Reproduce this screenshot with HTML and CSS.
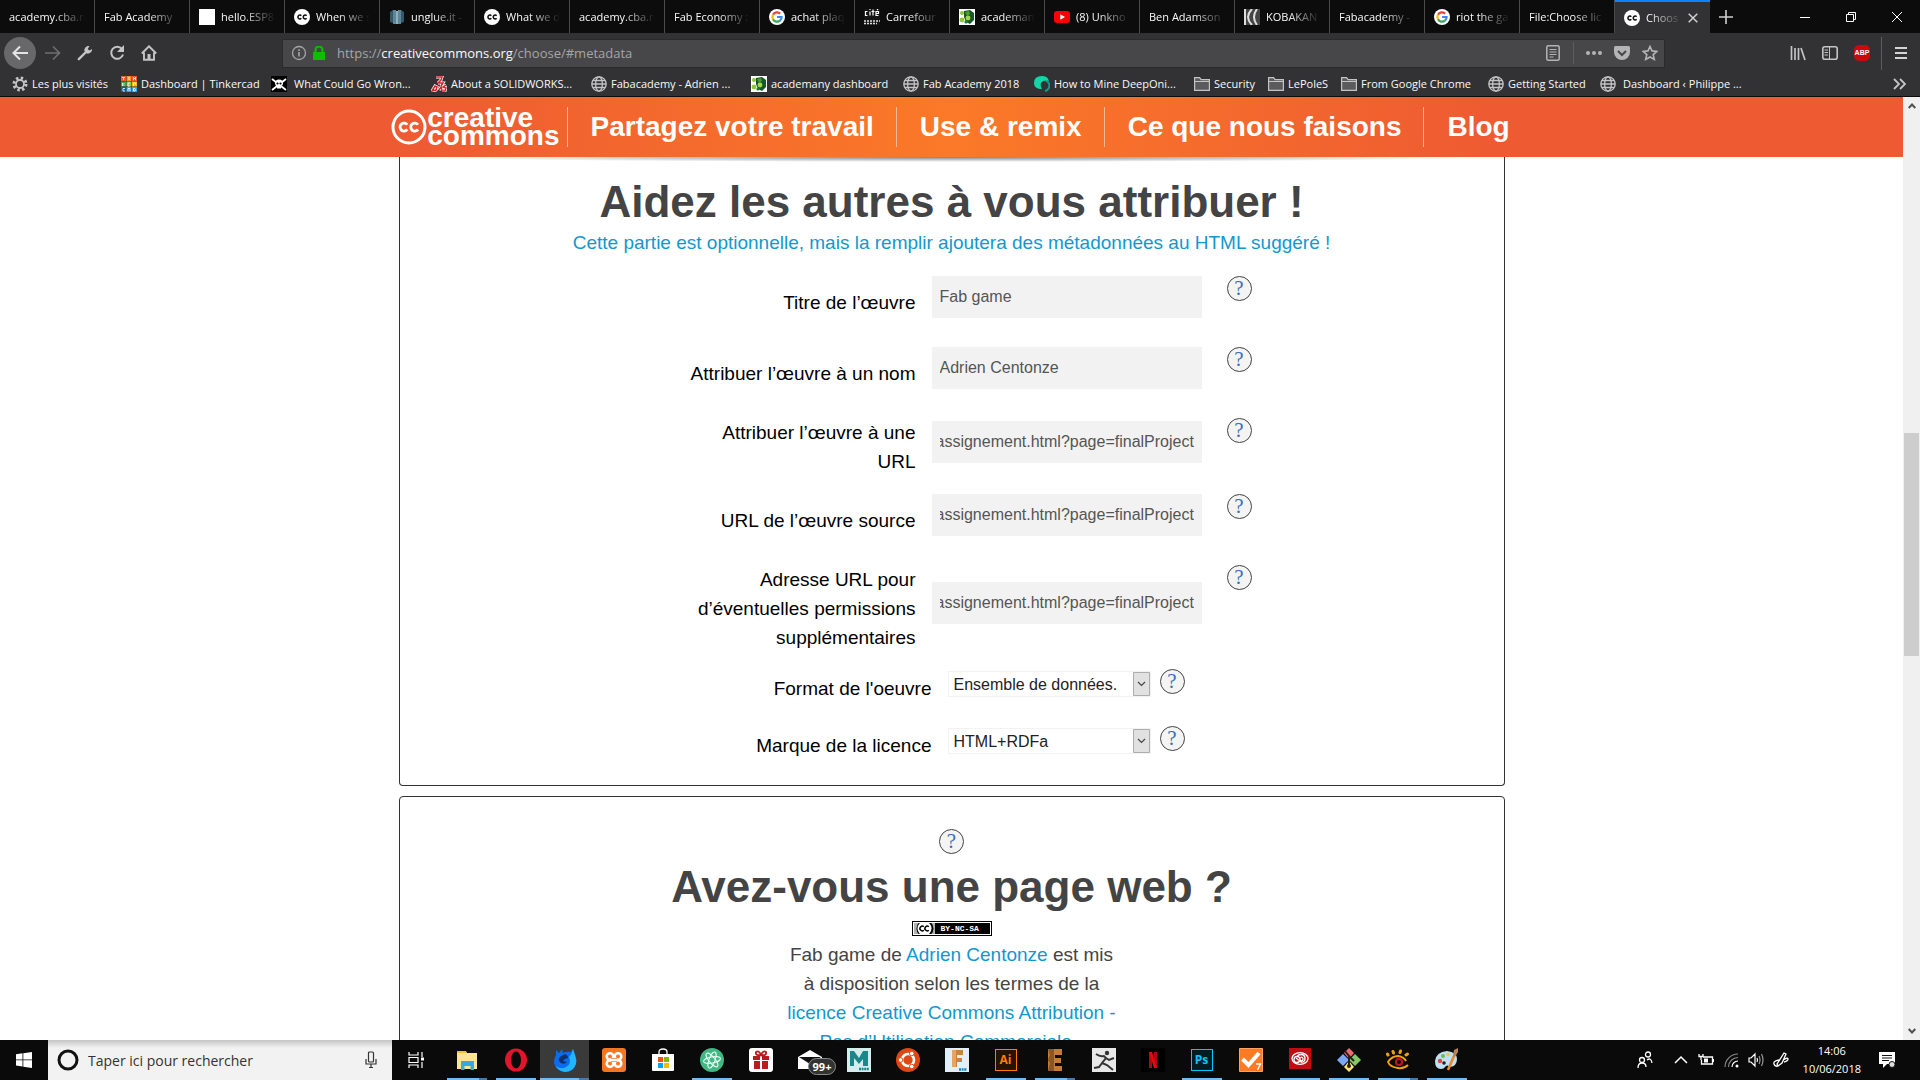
FILE: index.html
```html
<!DOCTYPE html>
<html lang="fr">
<head>
<meta charset="utf-8">
<title>Choose a License</title>
<link rel="stylesheet" href="styles.css">
</head>
<body>
<svg class="defs" aria-hidden="true">
  <symbol id="cc" viewBox="0 0 16 16"><circle cx="8" cy="8" r="8" fill="#fff"/><path d="M7.3 6.8a1.9 1.9 0 1 0 0 2.4M12.6 6.8a1.9 1.9 0 1 0 0 2.4" fill="none" stroke="#111" stroke-width="1.5"/></symbol>
  <symbol id="google" viewBox="0 0 16 16"><circle cx="8" cy="8" r="8" fill="#fff"/><g fill="none" stroke-width="2.2"><path d="M11.2 4.6A4.6 4.6 0 0 0 4 5.8" stroke="#ea4335"/><path d="M4 5.8a4.6 4.6 0 0 0 0 4.4" stroke="#fbbc05"/><path d="M4 10.2a4.6 4.6 0 0 0 7 1.4" stroke="#34a853"/><path d="M11 11.6A4.6 4.6 0 0 0 12.6 8H8" stroke="#4285f4"/></g></symbol>
  <symbol id="academany" viewBox="0 0 16 16"><path d="M0 0h16v16H0z" fill="#fff"/><path d="M5 2l6-1 4 3v7l-4 4-4-2-2-5z" fill="#15592a"/><path d="M6 3l4-1 1 3-3 2z" fill="#4e9a2b"/><circle cx="3" cy="4" r="2" fill="#8cc63f"/><circle cx="9" cy="9" r="2.4" fill="#a6d648"/><circle cx="3" cy="11" r="2.4" fill="#8cc63f"/><circle cx="7" cy="13" r="1.6" fill="#1f7a35"/></symbol>
  <symbol id="globe" viewBox="0 0 16 16"><g fill="none" stroke="#c4c4c6" stroke-width="1.3"><circle cx="8" cy="8" r="7.2"/><ellipse cx="8" cy="8" rx="3.4" ry="7.2"/><path d="M1 8h14M2 4.5h12M2 11.500h12"/></g></symbol>
  <symbol id="folder" viewBox="0 0 16 16"><path d="M.6 14.400V1.600h5l1.500 2h8.300v10.800z" fill="#5b5b5d" stroke="#c4c4c6" stroke-width="1.200"/><path d="M1 5.500h14" stroke="#c4c4c6"/></symbol>
</svg>

<header class="browser">
  <div class="tabs">
    <a class="tab" href="#"><span>academy.cba.n</span></a>
    <a class="tab" href="#"><span>Fab Academy</span></a>
    <a class="tab" href="#"><svg viewBox="0 0 16 16"><path d="M0 0h16v16H0z" fill="#fff"/></svg><span>hello.ESP8</span></a>
    <a class="tab" href="#"><svg><use href="#cc"/></svg><span>When we s</span></a>
    <a class="tab" href="#"><svg viewBox="0 0 16 16"><path d="M1 3l3-2v13l-3-1zM12 1l3 2v10l-3 1z" fill="#35586a"/><path d="M4 1h3v14H4zM9 1h3v14H9z" fill="#5d8799"/><path d="M7 2h2v13H7z" fill="#8fb0bd"/></svg><span>unglue.it -</span></a>
    <a class="tab" href="#"><svg><use href="#cc"/></svg><span>What we d</span></a>
    <a class="tab" href="#"><span>academy.cba.n</span></a>
    <a class="tab" href="#"><span>Fab Economy :</span></a>
    <a class="tab" href="#"><svg><use href="#google"/></svg><span>achat plaq</span></a>
    <a class="tab" href="#"><svg viewBox="0 0 16 16"><path d="M0 0h16v16H0z" fill="#151515"/><path d="M3.500 2.500H1.500v4h2M6 2.500v4M6 0v1M9 .5v6M7.500 2.500h3M14.500 6.500h-2.500v-4h2.500v2H12M13 1l1-1" fill="none" stroke="#fff" stroke-width="1.200"/><path d="M0 12h16M0 14.500h13" stroke="#ddd" stroke-width="1.500" stroke-dasharray="2 1"/></svg><span>Carrefour</span></a>
    <a class="tab" href="#"><svg><use href="#academany"/></svg><span>academan</span></a>
    <a class="tab" href="#"><svg viewBox="0 0 16 16"><rect y="2" width="16" height="12" rx="3" fill="#f00"/><path d="M6.300 5.200v5.600L11 8z" fill="#fff"/></svg><span>(8) Unkno</span></a>
    <a class="tab" href="#"><span>Ben Adamson</span></a>
    <a class="tab" href="#"><svg viewBox="0 0 16 16"><path d="M0 0h16v16H0z" fill="#444"/><path d="M1 0v16M8 0Q0 8 8 16M13 0Q7 8 13 16" fill="none" stroke="#ddd" stroke-width="2"/></svg><span>KOBAKAN</span></a>
    <a class="tab" href="#"><span>Fabacademy -</span></a>
    <a class="tab" href="#"><svg><use href="#google"/></svg><span>riot the ga</span></a>
    <a class="tab" href="#"><span>File:Choose lic</span></a>
    <a class="tab active" href="#"><svg><use href="#cc"/></svg><span>Choos</span><svg class="x" viewBox="0 0 10 10"><path d="M.7.7l8.600 8.600M9.300.7L.7 9.300" stroke="#d0d0d2" stroke-width="1.500"/></svg></a>
    <button class="newtab" aria-label="Nouvel onglet"><svg viewBox="0 0 14 14"><path d="M7 0v14M0 7h14" stroke="#d0d0d2" stroke-width="1.600"/></svg></button>
    <div class="win">
      <button aria-label="Réduire"><svg viewBox="0 0 10 10"><path d="M0 5.500h10" stroke="#fff"/></svg></button>
      <button aria-label="Restaurer"><svg viewBox="0 0 10 10"><path d="M.5 2.500h7v7h-7zM2.500 2.500v-2h7v7h-2" fill="none" stroke="#fff"/></svg></button>
      <button aria-label="Fermer"><svg viewBox="0 0 10 10"><path d="M0 0l10 10M10 0L0 10" stroke="#fff"/></svg></button>
    </div>
  </div>

  <div class="toolbar">
    <button class="back" aria-label="Précédent"><svg viewBox="0 0 16 16"><path d="M16 8H1.500M8 1.500L1.500 8 8 14.500" fill="none" stroke="#e4e4e6" stroke-width="2"/></svg></button>
    <button class="tool" aria-label="Suivant"><svg viewBox="0 0 16 16"><path d="M0 8h14.500M8 1.500L14.500 8 8 14.500" fill="none" stroke="#6f6f71" stroke-width="1.700"/></svg></button>
    <button class="tool" aria-label="Outils"><svg viewBox="0 0 16 16"><path d="M1.800 14.200L9 7" stroke="#c4c4c6" stroke-width="2.400" stroke-linecap="round"/><path d="M12.500 1A4.300 4.300 0 0 0 7.400 6l2.500 2.600A4.300 4.300 0 0 0 15 4l-2.600 1.500-1.700-1.600z" fill="#c4c4c6"/></svg></button>
    <button class="tool" aria-label="Actualiser"><svg viewBox="0 0 16 16"><path d="M12.900 4A6 6 0 1 0 14 9.500" fill="none" stroke="#c4c4c6" stroke-width="2"/><path d="M15 0v7H8z" fill="#c4c4c6"/></svg></button>
    <button class="tool" aria-label="Accueil"><svg viewBox="0 0 16 16"><path d="M.8 8.500L8 1.300l7.200 7.200M3 7.500v7.300h10V7.500" fill="none" stroke="#c4c4c6" stroke-width="1.900"/><path d="M6.500 9h3v5h-3z" fill="#c4c4c6"/></svg></button>
    <div class="urlbar">
      <svg viewBox="0 0 16 16"><circle cx="8" cy="8" r="6.500" fill="none" stroke="#a5a5a7" stroke-width="1.300"/><path d="M8 7v4.500M8 4.200V6" stroke="#a5a5a7" stroke-width="1.600"/></svg>
      <svg class="lock" viewBox="0 0 12 14"><path d="M0 6h12v8H0z" fill="#12bc00"/><path d="M2.500 7V4a3.500 3.500 0 0 1 7 0v3" fill="none" stroke="#12bc00" stroke-width="2"/></svg>
      <span class="url">https://<b>creativecommons.org</b>/choose/#metadata</span>
      <svg viewBox="0 0 16 16"><rect x="1.800" y=".8" width="12.400" height="14.400" rx="1.500" fill="none" stroke="#b4b4b6" stroke-width="1.500"/><path d="M4.500 4.500h7M4.500 7h7M4.500 9.500h7M4.500 12h4" stroke="#b4b4b6"/></svg>
      <i class="sep"></i>
      <svg viewBox="0 0 16 16"><circle cx="2" cy="8" r="2" fill="#b4b4b6"/><circle cx="8" cy="8" r="2" fill="#b4b4b6"/><circle cx="14" cy="8" r="2" fill="#b4b4b6"/></svg>
      <svg viewBox="0 0 16 16"><path d="M1.500 1h13Q16 1 16 2.500V7a8 8 0 0 1-16 0V2.500Q0 1 1.500 1z" fill="#b4b4b6"/><path d="M4 6l4 4 4-4" fill="none" stroke="#474749" stroke-width="2"/></svg>
      <svg viewBox="0 0 16 16"><path d="M8 1.500l2 4.400 4.800.5-3.600 3.200 1.100 4.800L8 12l-4.300 2.400 1.100-4.800L1.200 6.400 6 5.900z" fill="none" stroke="#b4b4b6" stroke-width="1.600"/></svg>
    </div>
    <div class="tools-right">
      <svg viewBox="0 0 16 16"><path d="M1.500 1v14M5 3v12M8.500 3v12M11 3l4 12" stroke="#c4c4c6" stroke-width="1.700"/></svg>
      <svg viewBox="0 0 16 16"><rect x=".8" y="1.800" width="14.400" height="12.400" rx="2" fill="none" stroke="#c4c4c6" stroke-width="1.600"/><path d="M7.500 2v12M2.500 5h3.500M2.500 7.500h3.500M2.500 10h3.500" stroke="#c4c4c6"/></svg>
      <span class="abp">ABP</span>
      <i class="sep"></i>
      <svg viewBox="0 0 16 16"><path d="M2 3h12M2 8h12M2 13h12" stroke="#d4d4d6" stroke-width="2"/></svg>
    </div>
  </div>

  <div class="bookmarks">
    <a href="#"><svg viewBox="0 0 16 16"><circle cx="8" cy="8" r="6" fill="none" stroke="#c4c4c6" stroke-width="3" stroke-dasharray="2.400 2.312"/><circle cx="8" cy="8" r="4" fill="none" stroke="#c4c4c6" stroke-width="1.800"/></svg>Les plus visités</a>
    <a href="#"><svg viewBox="0 0 16 16"><path d="M0 0h5v5H0z" fill="#f15a29"/><path d="M5.500 0h5v5h-5z" fill="#f7941e"/><path d="M11 0h5v5h-5z" fill="#f15a29"/><path d="M0 5.500h5v5H0z" fill="#39a845"/><path d="M5.500 5.500h5v5h-5z" fill="#8cc63f"/><path d="M11 5.500h5v5h-5z" fill="#fdb913"/><path d="M0 11h5v5H0z" fill="#0b60a8"/><path d="M5.500 11h5v5h-5zM11 11h5v5h-5z" fill="#27aae1"/><path d="M1 1.500h3M2.500 1.500V4M8 1v3M12.500 4V1.500l2 2V1M1.500 7v3M3.500 7l-1.500 1.500L3.500 10M9 7H7v3h2M12.500 10V7h2v1.500M4 12.500H2V15h2M7 15v-2.500h2V15M12.500 12.500H14l.5 1-.5 1.500h-1.500z" fill="none" stroke="#fff" stroke-width=".8"/></svg>Dashboard | Tinkercad</a>
    <a class="wide" href="#"><svg viewBox="0 0 16 16"><path d="M0 0h16v16H0z" fill="#000"/><path d="M1 3l14 11M15 3L1 14" stroke="#fff" stroke-width="1.800"/><ellipse cx="8" cy="7" rx="4" ry="3.600" fill="#fff"/><path d="M6 9h4v3.500H6z" fill="#fff"/><circle cx="6.500" cy="7.500" r="1.100"/><circle cx="9.500" cy="7.500" r="1.100"/></svg>What Could Go Wron...</a>
    <a href="#"><svg viewBox="0 0 16 16"><path d="M5 1h6l-1 3-3 3M7 7h5l-2 3M1 15l3-5 2 1-1 3zM8 14l2-3 1 3M15 9l-3 2 3 1-1 3h-3" fill="none" stroke="#fff" stroke-width="3"/><path d="M5 1h6l-1 3-3 3M7 7h5l-2 3M1 15l3-5 2 1-1 3zM8 14l2-3 1 3M15 9l-3 2 3 1-1 3h-3" fill="none" stroke="#da1f2d" stroke-width="1.500"/></svg>About a SOLIDWORKS...</a>
    <a href="#"><svg><use href="#globe"/></svg>Fabacademy - Adrien ...</a>
    <a href="#"><svg><use href="#academany"/></svg>academany dashboard</a>
    <a href="#"><svg><use href="#globe"/></svg>Fab Academy 2018</a>
    <a href="#"><svg viewBox="0 0 16 16"><path d="M11 15A5.500 5.500 0 1 0 5 7" fill="none" stroke="#0e9c84" stroke-width="2"/><path d="M8 0a7 7 0 0 1 7 5Q9 3 7 7q-1 3 1 6Q0 13 0 7q0-7 8-7z" fill="#12d6a8"/></svg>How to Mine DeepOni...</a>
    <a href="#"><svg><use href="#folder"/></svg>Security</a>
    <a href="#"><svg><use href="#folder"/></svg>LePoleS</a>
    <a href="#"><svg><use href="#folder"/></svg>From Google Chrome</a>
    <a href="#"><svg><use href="#globe"/></svg>Getting Started</a>
    <a class="wide" href="#"><svg><use href="#globe"/></svg>Dashboard ‹ Philippe ...</a>
    <svg class="more" viewBox="0 0 14 12"><path d="M1 1l5 5-5 5M7 1l5 5-5 5" fill="none" stroke="#c4c4c6" stroke-width="1.800"/></svg>
  </div>
</header>

<div class="viewport">
  <div class="page">
    <nav class="site">
      <a class="logo" href="#"><svg viewBox="0 0 36 36"><circle cx="18" cy="18" r="16" fill="none" stroke="#fff" stroke-width="3"/><path d="M16.300 15.800a4 4 0 1 0 0 4.600M27 15.800a4 4 0 1 0 0 4.600" fill="none" stroke="#fff" stroke-width="2.800"/></svg><span>creative<br>commons</span></a>
      <a href="#">Partagez votre travail</a>
      <a href="#">Use &amp; remix</a>
      <a href="#">Ce que nous faisons</a>
      <a href="#">Blog</a>
    </nav>
    <main>
      <form class="card first">
        <h1>Aidez les autres à vous attribuer !</h1>
        <p class="intro">Cette partie est optionnelle, mais la remplir ajoutera des métadonnées au HTML suggéré !</p>
        <div class="row"><label for="t">Titre de l’œuvre</label><input id="t" type="text" value="Fab game"><a class="help" href="#">?</a></div>
        <div class="row"><label for="n">Attribuer l’œuvre à un nom</label><input id="n" type="text" value="Adrien Centonze"><a class="help" href="#">?</a></div>
        <div class="row"><label for="u">Attribuer l’œuvre à une URL</label><input id="u" type="text" class="end" value="assignement.html?page=finalProject"><a class="help" href="#">?</a></div>
        <div class="row"><label for="s">URL de l’œuvre source</label><input id="s" type="text" class="end" value="assignement.html?page=finalProject"><a class="help" href="#">?</a></div>
        <div class="row"><label for="p">Adresse URL pour d’éventuelles permissions supplémentaires</label><input id="p" type="text" class="end" value="assignement.html?page=finalProject"><a class="help" href="#">?</a></div>
        <div class="row pick"><label for="f">Format de l'oeuvre</label><select id="f"><option>Ensemble de données.</option></select><a class="help" href="#">?</a></div>
        <div class="row pick"><label for="m">Marque de la licence</label><select id="m"><option>HTML+RDFa</option></select><a class="help" href="#">?</a></div>
      </form>
      <section class="card second">
        <a class="help" href="#">?</a>
        <h1>Avez-vous une page web ?</h1>
        <a class="badge" href="#"><svg viewBox="0 0 22 13"><path d="M0 0h22v13H0z" fill="#aab2ab"/><circle cx="12" cy="6.500" r="8.500" fill="#000"/><circle cx="11.500" cy="6.500" r="7" fill="#fff"/><path d="M10.800 4.800a2.300 2.300 0 1 0 0 3.400M15.800 4.800a2.300 2.300 0 1 0 0 3.400" fill="none" stroke="#000" stroke-width="1.500"/></svg><span>BY-NC-SA</span></a>
        <p class="terms">Fab game de <a href="#">Adrien Centonze</a> est mis à disposition selon les termes de la <a href="#">licence Creative Commons Attribution - Pas d’Utilisation Commerciale -</a></p>
      </section>
    </main>
  </div>
  <div class="scroll">
    <svg viewBox="0 0 8 6"><path d="M.7 5L4 1.500 7.300 5" fill="none" stroke="#505050" stroke-width="2"/></svg>
    <i></i>
    <svg viewBox="0 0 8 6"><path d="M.7 1L4 4.500 7.300 1" fill="none" stroke="#505050" stroke-width="2"/></svg>
  </div>
</div>

<footer class="taskbar">
  <button class="start" aria-label="Démarrer"><svg viewBox="0 0 16 16"><path d="M0 2.200L6.500 1.300v6.200H0zM7.300 1.200L16 0v7.500H7.300zM0 8.300h6.500v6.200L0 13.600zM7.300 8.300H16V16l-8.700-1.300z" fill="#fff"/></svg></button>
  <div class="search">
    <svg class="cortana" viewBox="0 0 22 22"><circle cx="11" cy="11" r="9" fill="none" stroke="#111" stroke-width="3"/></svg>
    <input type="text" aria-label="Rechercher" placeholder="Taper ici pour rechercher">
    <svg class="mic" viewBox="0 0 12 18"><rect x="3.500" y="1" width="5" height="10" rx="1" fill="none" stroke="#333" stroke-width="1.200"/><path d="M1 8v5h10V8M6 13v4M4 16.500h4" fill="none" stroke="#333" stroke-width="1.200"/></svg>
  </div>
  <div class="apps">
    <span><svg viewBox="0 0 24 24"><path d="M3 4v3h9V4M3 20v-3h9v3M3 9.500h9v5H3zM16 4v5M16 14v6" fill="none" stroke="#fff" stroke-width="1.200"/><path d="M15 9.500h3v3h-3z" fill="#fff"/></svg></span>
    <span class="run many"><svg viewBox="0 0 24 24"><path d="M2 3h9l1 2h10v16H2z" fill="#ffe493"/><path d="M2 3h9v2H2z" fill="#f2c230"/><path d="M6 22v-9h13v9h-3.500v-4h-6v4z" fill="#35a9e0"/></svg></span>
    <span class="run"><svg viewBox="0 0 24 24"><ellipse cx="12" cy="12" rx="11" ry="11.500" fill="#e0142a"/><ellipse cx="12" cy="12" rx="5" ry="8.500" fill="#0a0a0a"/></svg></span>
    <span class="run many on"><svg viewBox="0 0 24 24"><path d="M3 7l0-5 3 3 3-4 1 4q4-2 8-1l2-3 2 6q2 5 1 9-3 8-11 8-9-1-11-9 0-5 2-8z" fill="#0a6cf0"/><path d="M20 1l2 6q2 5 1 9-3 8-11 8-7-1-9-6 5 4 10 1 6-3 3-10 3-3 4-8z" fill="#21b4ff"/><path d="M8 8l4-2q3 1 3 4l-3 1-2 2 4 1q-3 3-6 1t-2-5z" fill="#12306b"/></svg></span>
    <span><svg viewBox="0 0 24 24"><rect width="24" height="24" rx="3" fill="#f37623"/><g fill="none" stroke="#fff" stroke-width="2.600"><circle cx="8" cy="8.500" r="3.300"/><circle cx="16" cy="8.500" r="3.300"/><circle cx="8" cy="15.500" r="3.300"/><circle cx="16" cy="15.500" r="3.300"/></g><path d="M9 10h6v4H9z" fill="#f37623"/><path d="M8 12h8" stroke="#fff" stroke-width="2.600"/></svg></span>
    <span><svg viewBox="0 0 24 24"><path d="M1 6h22v16q0 1-1 1H2q-1 0-1-1z" fill="#fff"/><path d="M8 6V4q0-3 4-3t4 3v2" fill="none" stroke="#fff" stroke-width="1.300"/><path d="M7 9h5v5H7z" fill="#f25022"/><path d="M13 9h5v5h-5z" fill="#7fba00"/><path d="M7 15h5v5H7z" fill="#00a4ef"/><path d="M13 15h5v5h-5z" fill="#ffb900"/></svg></span>
    <span class="run"><svg viewBox="0 0 24 24"><circle cx="12" cy="12" r="12" fill="#41b883"/><g fill="none" stroke="#e6fff2" stroke-width="1"><ellipse cx="12" cy="12" rx="3" ry="8.500" transform="rotate(20 12 12)"/><ellipse cx="12" cy="12" rx="3" ry="8.500" transform="rotate(80 12 12)"/><ellipse cx="12" cy="12" rx="3" ry="8.500" transform="rotate(140 12 12)"/></g></svg></span>
    <span><svg viewBox="0 0 24 24"><rect width="24" height="24" rx="3" fill="#fff"/><path d="M4 8h7v4H4zM13 8h7v4h-7zM5 13h6v8H5zM13 13h6v8h-6z" fill="#b81c1c"/><path d="M12 7Q6 8 7 4q3-2 5 3Q14 2 17 4q1 4-5 3" fill="none" stroke="#b81c1c" stroke-width="1.800"/></svg></span>
    <span class="mail"><svg viewBox="0 0 24 24"><path d="M0 9l12-7 12 7v12H0z" fill="#fff"/><path d="M1 9h22l-11 7z" fill="#111"/></svg><b>99+</b></span>
    <span><svg viewBox="0 0 24 24"><path d="M0 0h24v24H0z" fill="#d5edec"/><path d="M3 18V3h4l5 7 4-7h5v15h-5V11l-4 5-5-6v8z" fill="#19888b"/><path d="M12 21h10" stroke="#19888b" stroke-width="2.500" stroke-dasharray="2 .6"/></svg></span>
    <span><svg viewBox="0 0 24 24"><circle cx="12" cy="12" r="12" fill="#dd4814"/><circle cx="12" cy="12" r="6" fill="none" stroke="#fff" stroke-width="2.600"/><g fill="#fff" stroke="#dd4814"><circle cx="4.500" cy="12" r="2.300"/><circle cx="15.800" cy="5.500" r="2.300"/><circle cx="15.800" cy="18.500" r="2.300"/></g></svg></span>
    <span><svg viewBox="0 0 24 24"><path d="M0 0h24v24H0z" fill="#dff0fa"/><path d="M7 2h11v5h-6v3h5v4h-5v5H7z" fill="#c98343"/><path d="M7 2h4v17H7z" fill="#e5a364"/><path d="M14 21.500h8" stroke="#1789c7" stroke-width="2.500" stroke-dasharray="2 .6"/></svg></span>
    <span class="run"><b class="adobe ai">Ai</b></span>
    <span class="run many"><svg viewBox="0 0 24 24"><path d="M5 1h14v6h-7v3h6v5h-6v3h7v5H5z" fill="#c07c3a"/><path d="M5 1h6v22H5l2-8-2-3 2-5z" fill="#8b5524"/></svg></span>
    <span><svg viewBox="0 0 24 24"><path d="M0 0h24v24H0z" fill="#e8e8e8"/><circle cx="15" cy="5" r="2.200" fill="#333"/><path d="M4 6q4 3 8 2l2 2-4 5 5 2 6 5M10 15l-3 4-5 1M14 10l3 2 5-2" fill="none" stroke="#333" stroke-width="2"/></svg></span>
    <span><svg viewBox="0 0 24 24"><path d="M0 0h24v24H0z" fill="#000"/><path d="M8 4h3v16H8zM13 4h3v16h-3z" fill="#b20710"/><path d="M8 4h3l5 16h-3z" fill="#e50914"/></svg></span>
    <span class="run"><b class="adobe ps">Ps</b></span>
    <span><svg viewBox="0 0 24 24"><path d="M.5.5h23v23H.5z" fill="#ff7a22" stroke="#ffa265"/><path d="M3.500 11l6 6L20 5" fill="none" stroke="#fff" stroke-width="4"/><path d="M17 16h4.500l-3 6" fill="none" stroke="#fff" stroke-width="1.300"/></svg></span>
    <span class="run"><svg viewBox="0 0 24 24"><path d="M1 0h22v21H1z" fill="#c00d10"/><g fill="none" stroke="#fff" stroke-width="1.300"><ellipse cx="12" cy="10.500" rx="8" ry="5.800"/><circle cx="9" cy="11.500" r="3"/><path d="M9 8.500q1-2 4-2 4 0 4 4t-4 3.500l-5-4M12 10q3-2 3 1t-3 1"/></g></svg></span>
    <span class="run"><svg viewBox="0 0 24 24"><path d="M12 0l5 5-5 6-5-6z" fill="#ef6b6b"/><path d="M6 6l6 6-6 6-6-6z" fill="#7da7f0"/><path d="M18 6l6 6-6 6-6-6z" fill="#85c866"/><path d="M12 13l5 6-5 5-5-5z" fill="#ffe271"/><path d="M8 3l4 5v10M12 8l5 5" fill="none" stroke="#222" stroke-width="2"/><circle cx="12" cy="18" r="2" fill="#222"/></svg></span>
    <span class="run many"><svg viewBox="0 0 24 24"><path d="M22 17q-4 4-10 3-8-1-10-6 4-6 10-6 6 1 8 5" fill="none" stroke="#f2a10c" stroke-width="2"/><circle cx="13" cy="14" r="3" fill="none" stroke="#c3141a" stroke-width="2.200"/><path d="M2 7L1.500 6M7.500 5L7 3.500M14 4.500l.5-1.500M20 7l1.500-1" stroke="#f2a10c" stroke-width="3" stroke-linecap="round"/></svg></span>
    <span class="run"><svg viewBox="0 0 24 24"><path d="M12 3Q1 4 0 13q0 8 6 8 3 0 4-2 2-3 5 0 7-1 7-8 0-7-10-8z" fill="#bfe0f2"/><circle cx="5" cy="13" r="2.200" fill="#e0453b"/><circle cx="8" cy="8" r="2" fill="#6abf4b"/><circle cx="13" cy="6.500" r="1.800" fill="#f0c93b"/><circle cx="9" cy="15" r="1.800" fill="#222"/><path d="M13 22l6-14" stroke="#e68a2c" stroke-width="2.600"/><path d="M18 8l1-6 4-2v4l-3 5z" fill="#b98252"/></svg></span>
  </div>
  <div class="tray">
    <svg viewBox="0 0 16 18"><g fill="none" stroke="#fff" stroke-width="1.300"><circle cx="11" cy="3.500" r="2.500"/><circle cx="5" cy="9" r="2.500"/><path d="M1 17q0-5 4-5t4 4M10 9q4-3 5 3"/></g></svg>
    <svg viewBox="0 0 16 16"><path d="M2 11l6-6 6 6" fill="none" stroke="#fff" stroke-width="1.500"/></svg>
    <svg viewBox="0 0 16 16"><path d="M5 5h9.500v7H3.500V8M1 2v2.500h4V2M3 5v3" fill="none" stroke="#fff" stroke-width="1.300"/><path d="M6 6.500h4v4H6zM15 7h1v3h-1z" fill="#fff"/></svg>
    <svg viewBox="0 0 16 16"><g fill="none" stroke="#888" stroke-width="1.200"><path d="M2 15A13 13 0 0 1 15 2"/><path d="M5.500 15A9.500 9.500 0 0 1 15 5.500"/></g><path d="M9 15a6 6 0 0 1 6-6" fill="none" stroke="#fff" stroke-width="1.200"/><circle cx="14" cy="14" r="1.500" fill="#fff"/></svg>
    <svg viewBox="0 0 16 16"><path d="M1 6v4h2l4 4V2L3 6zM9 6q1 2 0 4" fill="none" stroke="#fff" stroke-width="1.200"/><path d="M11 4q2 4 0 8M13.500 2q3 6 0 12" fill="none" stroke="#999" stroke-width="1.200"/></svg>
    <svg viewBox="0 0 16 16"><path d="M4 12L11 1l2 1-4 9-4 3zM6 8q-6 1-5 4t4 2M10 8q5-3 5-1t-4 3" fill="none" stroke="#fff" stroke-width="1.300"/></svg>
    <time>14:06<br>10/06/2018</time>
    <svg viewBox="0 0 16 16"><path d="M0 0h16v12H8l-4 4v-4H0z" fill="#fff"/><path d="M3 3.500h10M3 6h10M3 8.500h7" stroke="#111"/><circle cx="13" cy="12.500" r="3" fill="#ddd" stroke="#111"/></svg>
  </div>
</footer>
<script src="script.js"></script>
</body>
</html>
```
FILE: styles.css
```css
* { box-sizing: border-box; }

body {
  margin: 0;
  height: 100vh;
  display: flex;
  flex-direction: column;
  overflow: hidden;
  background: #fff;
  font-family: "Liberation Sans", Arial, sans-serif;
}

a { color: inherit; text-decoration: none; }
button { border: 0; padding: 0; background: none; }
svg { display: block; flex: none; }
.defs { position: absolute; width: 0; height: 0; }

/* Browser chrome */
.browser {
  flex: none;
  background: #323234;
  border-bottom: 1px solid #0c0c0d;
  color: #f9f9fa;
  font: 11px/16px "Open Sans", sans-serif;
}

.tabs { display: flex; height: 33px; background: #0c0c0d; }

.tab {
  flex: none;
  display: flex;
  align-items: center;
  gap: 6px;
  width: 95px;
  padding: 0 9px;
  border-right: 1px solid #4a4a4c;
}
.tab svg { width: 16px; height: 16px; }
.tab span {
  flex: 1;
  overflow: hidden;
  white-space: nowrap;
  mask-image: linear-gradient(to left, transparent, #000 32px);
}
.tab.active { padding-right: 12px; background: #323234; border-top: 2px solid #0a84ff; border-right: 0; }
.tab .x { width: 10px; height: 10px; }
.newtab { display: grid; place-items: center; width: 32px; }
.newtab svg { width: 14px; height: 14px; }
.win { display: flex; margin-left: auto; }
.win button { display: grid; place-items: center; width: 46px; }
.win svg { width: 10px; height: 10px; }

.toolbar { display: flex; align-items: center; height: 40px; padding: 0 11px 0 4px; }
.back {
  display: grid;
  place-items: center;
  width: 32px;
  height: 32px;
  margin-right: 1px;
  border-radius: 50%;
  background: #68686a;
}
.tool { display: grid; place-items: center; width: 32px; height: 32px; }
.toolbar svg { width: 16px; height: 16px; }
.urlbar {
  flex: 1;
  display: flex;
  align-items: center;
  gap: 12px;
  height: 29px;
  margin: 0 125px 0 117px;
  padding: 0 6px 0 8px;
  background: #474749;
  border: 1px solid #2a2a2c;
}
.urlbar .lock { width: 12px; height: 14px; margin-left: -6px; }
.url { flex: 1; font-size: 13px; color: #a5a5a7; }
.url b { font-weight: 400; color: #f9f9fa; }
.sep { width: 1px; height: 22px; background: #5d5d60; }
.tools-right { display: flex; align-items: center; gap: 16px; }
.tools-right .sep { height: 33px; margin: 0 -5px; }
.abp {
  width: 16px;
  height: 16px;
  border-radius: 5px;
  background: #c80c0c;
  font: bold 7px/16px "Liberation Sans", Arial, sans-serif;
  text-align: center;
}

.bookmarks {
  display: grid;
  grid-template-columns: 109px 150px 160px 160px 160px 152px 131px 160px 74px 73px 147px 112px 1fr auto;
  align-items: center;
  height: 23px;
  padding: 0 13px 2px 12px;
}
.bookmarks a { display: flex; align-items: center; gap: 4px; white-space: nowrap; }
.bookmarks .wide { gap: 7px; }
.bookmarks a svg { width: 16px; height: 16px; }
.more { width: 14px; height: 12px; }

/* Page area with its scroll bar */
.viewport { flex: 1; min-height: 0; display: flex; }
.page { flex: 1; min-width: 0; overflow: hidden; }

.scroll {
  flex: none;
  display: flex;
  flex-direction: column;
  align-items: center;
  width: 17px;
  padding: 6px 0;
  background: #f0f0f0;
}
.scroll svg { width: 8px; height: 6px; }
.scroll i { width: 15px; height: 24%; margin: 324px 0 auto; background: #cdcdcd; }

.site {
  position: relative;
  display: flex;
  justify-content: center;
  align-items: center;
  height: 60px;
  padding-right: 2px;
  background: linear-gradient(to right, #ee5b32 22%, #fb7928 50%, #ee5b32 78%);
  color: #fff;
  font-weight: bold;
  font-size: 28px;
}
.site::after {
  content: "";
  position: absolute;
  top: 100%;
  left: 22%;
  right: 22%;
  height: 5px;
  background: radial-gradient(ellipse 50% 100% at 50% 0, rgba(0, 0, 0, .5), transparent);
}
.site > a { padding: 0 22px 0 23px; line-height: 40px; border-left: 1px solid #fbb896; white-space: nowrap; }
.site > a:last-child { padding-right: 0; }
.site > .logo { display: flex; align-items: center; padding: 0 7px 0 0; border: 0; line-height: 18px; }
.logo svg { width: 36px; height: 36px; }

.card {
  max-width: 1106px;
  margin: 0 auto;
  border: 1px solid #333;
  border-radius: 4px;
  color: #444;
  text-align: center;
}
.first { border-top: 0; border-radius: 0 0 4px 4px; padding: 18px 0 2px; }
.second { margin-top: 10px; padding: 32px 0; display: flex; flex-direction: column; align-items: center; }

h1 { margin: 0; font-size: 44px; line-height: 54px; }
.intro { margin: 0 0 19px; color: #1198d0; font-size: 19px; line-height: 28px; }
.second h1 { margin-top: 6px; }

.row {
  display: grid;
  grid-template-columns: 233px 270px 25px;
  column-gap: 16px;
  align-items: center;
  margin: 0 0 18px 283px;
}
.row label { color: #000; font-size: 19px; line-height: 29px; text-align: right; }
.row input {
  width: 270px;
  height: 42px;
  margin-bottom: 11px;
  padding: 0 8px;
  border: 0;
  background: #f2f2f2;
  color: #555;
  font: 16px "Liberation Sans", Arial, sans-serif;
}
.row .help { align-self: start; margin-left: 9px; }
.row:has(+ .pick) { margin-bottom: 17px; }

.help {
  display: block;
  width: 25px;
  height: 25px;
  border: 1px solid #444;
  border-radius: 50%;
  background: #f4f4f4;
  color: #3b6fc0;
  font: 21px/23px "Liberation Serif", serif;
  text-align: center;
}

.row.pick { grid-template-columns: 249px 203px 25px; height: 39px; margin-bottom: 18px; align-items: start; }
.pick label { padding-top: 5px; }
.pick .help { margin-left: -7px; }
.row select {
  appearance: none;
  width: 203px;
  height: 26px;
  margin-top: 2px;
  padding: 0 5px;
  border: 1px solid #f2f2f2;
  border-radius: 0;
  background:
    url("data:image/svg+xml,%3Csvg xmlns='http://www.w3.org/2000/svg' width='17' height='24'%3E%3Cpath d='M.5.5h16v23H.5z' fill='%23e1e1e1' stroke='%23adadad'/%3E%3Cpath d='M5 10l3.500 3.500L12 10' fill='none' stroke='%23444' stroke-width='1.200'/%3E%3C/svg%3E") right center no-repeat #fff;
  color: #222;
  font: 16px "Liberation Sans", Arial, sans-serif;
}

.badge {
  display: flex;
  align-items: center;
  width: 80px;
  height: 15px;
  margin: 7px 0 4px;
  border: 1px solid #000;
  outline: 1px solid #fff;
  outline-offset: -2px;
  background: #000;
  color: #fff;
  font: bold 8px/13px "Liberation Mono", monospace;
}
.badge svg { width: 22px; height: 13px; margin-right: 6px; }
.terms { max-width: 336px; margin: 0; font-size: 19px; line-height: 29px; }
.terms a { color: #1198d0; }

/* Windows taskbar */
.taskbar { flex: none; display: flex; height: 40px; background: #0a0a0a; color: #fff; }
.start { display: grid; place-items: center; width: 48px; }
.start svg { width: 16px; height: 16px; }
.search {
  display: flex;
  align-items: center;
  width: 344px;
  padding: 0 15px 0 9px;
  background: linear-gradient(#c4c4c4, #f2f2f2 8px);
}
.search input {
  flex: 1;
  min-width: 0;
  border: 0;
  padding: 0 9px;
  background: none;
  font: 14px "Open Sans", sans-serif;
}
.search input::placeholder { color: #333; }
.cortana { width: 22px; height: 22px; }
.mic { width: 12px; height: 18px; }

.apps { display: flex; margin-left: 1px; }
.apps > span {
  position: relative;
  display: grid;
  place-items: center;
  width: 49px;
}
.apps svg { width: 24px; height: 24px; }
.apps .on { background: #3a3a3a; }
.run::after {
  content: "";
  position: absolute;
  bottom: 0;
  left: 5px;
  width: 40px;
  height: 2px;
  background: #76b9ed;
}
.many::after { background: linear-gradient(to right, #76b9ed 80%, #4a7aa3 80%); }
.on.run::after { left: 0; width: 49px; }
.mail b {
  position: absolute;
  left: 23px;
  top: 18px;
  width: 28px;
  border: 1px solid #8a8a8a;
  border-radius: 9px;
  background: #333;
  font: bold 11px/15px "Open Sans", sans-serif;
  text-align: center;
}
.adobe { width: 22px; height: 22px; border: 1px solid; font: bold 12px/19px "Open Sans", sans-serif; text-align: center; }
.ai { color: #ff7c00; background: #261300; }
.ps { color: #00c8ff; background: #001d26; }

.tray { display: flex; align-items: center; gap: 9px; margin-left: auto; padding-right: 25px; }
.tray svg { width: 16px; height: 16px; }
.tray svg:first-child { height: 18px; margin-right: 11px; }
.tray time { margin: 0 9px 0 5px; font: 11px/18px "Open Sans", sans-serif; text-align: center; }
```
FILE: script.js
```js
// Long addresses show their end rather than their start.
document.querySelectorAll('input.end').forEach(function (field) {
  field.scrollLeft = field.scrollWidth;
});
```
